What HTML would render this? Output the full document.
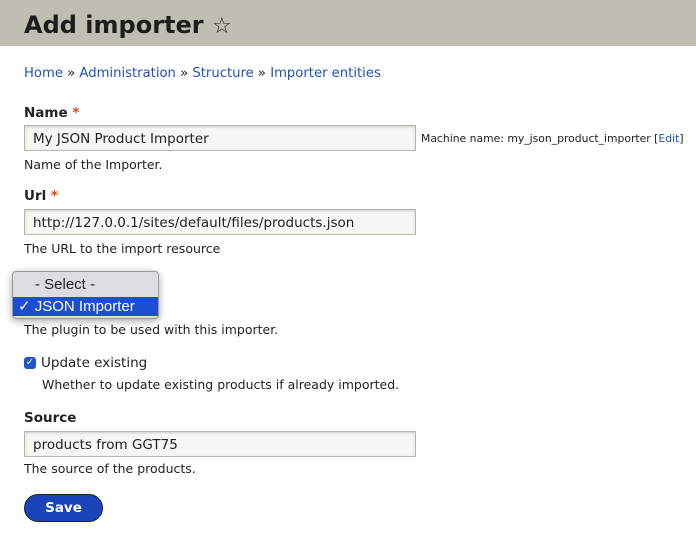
<!DOCTYPE html>
<html><head><style>
body{margin:0;width:696px;height:539px;background:#fff;font-family:"DejaVu Sans","Liberation Sans",sans-serif;color:#222;position:relative;overflow:hidden}
.a{position:absolute;white-space:nowrap}
.hdr{left:0;top:0;width:696px;height:46px;background:#bebfb2}
h1{position:absolute;left:24px;top:11px;margin:0;font-size:24px;font-weight:bold;color:#1d1d1d}
.bc{font-size:13.2px;color:#1f52b8}
.lbl{font-size:13.5px;font-weight:bold}
.st{color:#e0420e}
.inp{border:1px solid #b8b8b0;background:#f6f6f3;box-shadow:inset 0 1px 2px #ccc;width:390px;height:26px;font-size:13.5px;line-height:26px;padding-left:8px;box-sizing:border-box}
.d{font-size:12.5px}
</style></head><body>
<div class="a hdr"></div>
<h1>Add importer <span style="font-weight:normal;font-size:22px">☆</span></h1>
<div class="a bc" style="left:24px;top:66px">Home <span style="color:#222">»</span> Administration <span style="color:#222">»</span> Structure <span style="color:#222">»</span> Importer entities</div>
<div class="a lbl" style="left:24px;top:105px">Name <span class="st">*</span></div>
<div class="a inp" style="left:24px;top:125px;width:392px">My JSON Product Importer</div>
<div class="a" style="left:421px;top:132px;font-size:10.8px">Machine name: my_json_product_importer [<span style="color:#1f52b8">Edit</span>]</div>
<div class="a d" style="left:24px;top:157px">Name of the Importer.</div>
<div class="a lbl" style="left:24px;top:188px">Url <span class="st">*</span></div>
<div class="a inp" style="left:24px;top:209px;width:392px">http://127.0.0.1/sites/default/files/products.json</div>
<div class="a d" style="left:24px;top:241px">The URL to the import resource</div>
<div class="a d" style="left:24px;top:322px">The plugin to be used with this importer.</div>
<div class="a" style="left:12px;top:271px;width:147px;height:48px;background:#dcdde0;border:1px solid #999;border-radius:4px;box-shadow:0 2px 8px rgba(0,0,0,.35);box-sizing:border-box;overflow:hidden">
 <div style="position:absolute;left:22px;top:4px;font-family:'Liberation Sans',sans-serif;font-size:15px">- Select -</div>
 <div style="position:absolute;left:0;top:25px;width:147px;height:19px;background:#1c4fd0;color:#fff;font-family:'Liberation Sans',sans-serif;font-size:15px;line-height:19px;padding-left:5px">✓ JSON Importer</div>
</div>
<div class="a" style="left:24px;top:357px;width:12px;height:12px;background:#1f55d0;border-radius:3px;color:#fff;font-size:10px;line-height:12px;text-align:center">✓</div>
<div class="a" style="left:41px;top:355px;font-size:13.5px">Update existing</div>
<div class="a d" style="left:42px;top:377px">Whether to update existing products if already imported.</div>
<div class="a lbl" style="left:24px;top:410px">Source</div>
<div class="a inp" style="left:24px;top:431px;width:392px">products from GGT75</div>
<div class="a d" style="left:24px;top:461px">The source of the products.</div>
<div class="a" style="left:24px;top:494px;width:79px;height:28px;background:#1a45b8;border:1px solid #222;border-radius:14px;box-sizing:border-box;color:#fff;font-weight:bold;font-size:13.5px;line-height:26px;text-align:center">Save</div>
</body></html>
